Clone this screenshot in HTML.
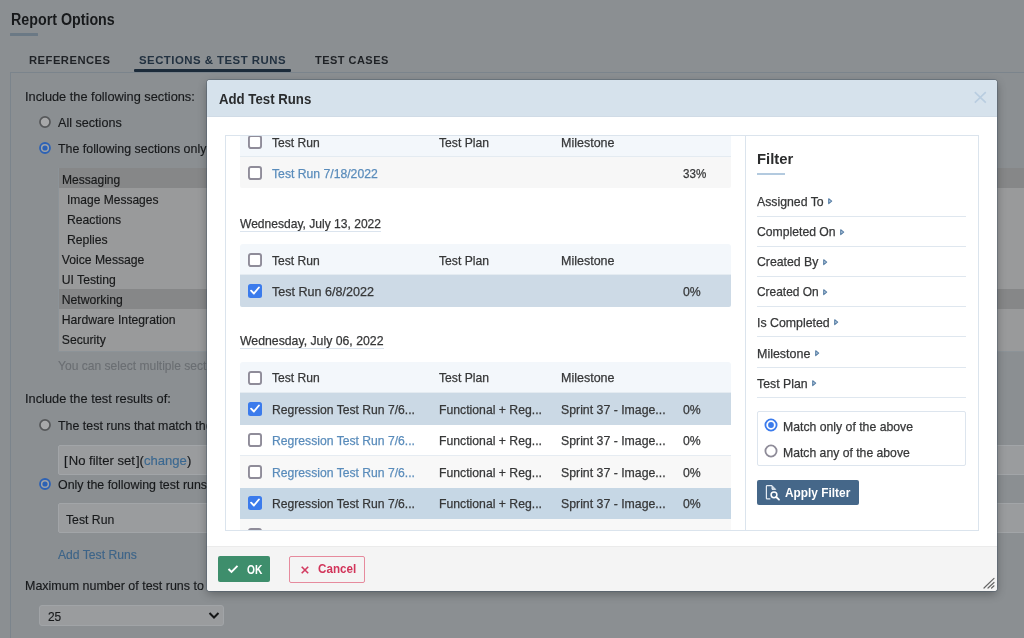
<!DOCTYPE html>
<html><head><meta charset="utf-8"><title>Add Test Runs</title>
<style>
html,body{margin:0;padding:0;}
body{width:1024px;height:638px;overflow:hidden;position:relative;will-change:transform;font-family:"Liberation Sans", sans-serif;background:#8b8f92;}
.t{position:absolute;white-space:nowrap;}
.r{position:absolute;}
</style></head><body>
<div class="t" id="t0" style="left:10.5px;top:9.05px;font-size:16px;line-height:21px;color:#17191b;font-weight:bold;transform:scaleX(0.8910);transform-origin:0 0;">Report Options</div>
<div class="r" style="left:10px;top:33px;width:28px;height:2.6px;background:#6b7985;border-radius:0.5px;"></div>
<div class="t" id="t1" style="left:29px;top:52.71px;font-size:11.8px;line-height:15px;color:#1f2226;font-weight:bold;letter-spacing:0.5px;transform:scaleX(0.9517);transform-origin:0 0;">REFERENCES</div>
<div class="t" id="t2" style="left:139px;top:52.71px;font-size:11.8px;line-height:15px;color:#223140;font-weight:bold;letter-spacing:0.5px;transform:scaleX(0.9656);transform-origin:0 0;">SECTIONS &amp; TEST RUNS</div>
<div class="r" style="left:134px;top:69.4px;width:157px;height:2.7px;background:#1c2b3a;border-radius:1px;"></div>
<div class="t" id="t3" style="left:314.75px;top:52.71px;font-size:11.8px;line-height:15px;color:#1f2226;font-weight:bold;letter-spacing:0.5px;transform:scaleX(0.9326);transform-origin:0 0;">TEST CASES</div>
<div class="r" style="left:10px;top:72px;width:1014px;height:1px;background:#7b848c;"></div>
<div class="r" style="left:10px;top:72px;width:1px;height:566px;background:#7b848c;"></div>
<div class="t" id="t4" style="left:25.2px;top:87.86px;font-size:12.8px;line-height:17px;color:#17191b;-webkit-text-stroke:0.15px #17191b;transform:scaleX(0.9987);transform-origin:0 0;">Include the following sections:</div>
<svg class="r" style="left:36.85px;top:114.10px" width="16" height="16" viewBox="0 0 16 16"><circle cx="8" cy="8" r="5.05" fill="#a7a8a9" stroke="#56585a" stroke-width="1.7"/></svg>
<div class="t" id="t5" style="left:58px;top:114.36px;font-size:12.8px;line-height:17px;color:#17191b;-webkit-text-stroke:0.15px #17191b;transform:scaleX(0.9840);transform-origin:0 0;">All sections</div>
<svg class="r" style="left:36.85px;top:140.10px" width="16" height="16" viewBox="0 0 16 16"><circle cx="8" cy="8" r="5.00" fill="#a2a4a6" stroke="#2d62b5" stroke-width="1.8"/><circle cx="8" cy="8" r="2.6" fill="#2d62b5"/></svg>
<div class="t" id="t6" style="left:58px;top:140.36px;font-size:12.8px;line-height:17px;color:#17191b;-webkit-text-stroke:0.15px #17191b;transform:scaleX(0.9700);transform-origin:0 0;">The following sections only</div>
<div class="r" style="left:57.5px;top:168.2px;width:980px;height:184.3px;background:#999a9b;box-sizing:border-box;border:1px solid #8c9398;"></div>
<div class="r" style="left:58.5px;top:168.2px;width:980px;height:20.08px;background:#868788;"></div>
<div class="t" id="t7" style="left:61.75px;top:171.57px;font-size:12.2px;line-height:16px;color:#18191a;-webkit-text-stroke:0.15px #18191a;transform:scaleX(0.9881);transform-origin:0 0;">Messaging</div>
<div class="t" id="t8" style="left:67.0px;top:191.65px;font-size:12.2px;line-height:16px;color:#18191a;-webkit-text-stroke:0.15px #18191a;transform:scaleX(0.9859);transform-origin:0 0;">Image Messages</div>
<div class="t" id="t9" style="left:67.0px;top:211.73px;font-size:12.2px;line-height:16px;color:#18191a;-webkit-text-stroke:0.15px #18191a;">Reactions</div>
<div class="t" id="t10" style="left:67.0px;top:231.81px;font-size:12.2px;line-height:16px;color:#18191a;-webkit-text-stroke:0.15px #18191a;">Replies</div>
<div class="t" id="t11" style="left:61.75px;top:251.89px;font-size:12.2px;line-height:16px;color:#18191a;-webkit-text-stroke:0.15px #18191a;">Voice Message</div>
<div class="t" id="t12" style="left:61.75px;top:271.97px;font-size:12.2px;line-height:16px;color:#18191a;-webkit-text-stroke:0.15px #18191a;">UI Testing</div>
<div class="r" style="left:58.5px;top:288.67999999999995px;width:980px;height:20.08px;background:#868788;"></div>
<div class="t" id="t13" style="left:61.75px;top:292.05px;font-size:12.2px;line-height:16px;color:#18191a;-webkit-text-stroke:0.15px #18191a;">Networking</div>
<div class="t" id="t14" style="left:61.75px;top:312.13px;font-size:12.2px;line-height:16px;color:#18191a;-webkit-text-stroke:0.15px #18191a;">Hardware Integration</div>
<div class="t" id="t15" style="left:61.75px;top:332.21px;font-size:12.2px;line-height:16px;color:#18191a;-webkit-text-stroke:0.15px #18191a;">Security</div>
<div class="t" id="t16" style="left:57.5px;top:357.77px;font-size:12.2px;line-height:16px;color:#6a6e72;-webkit-text-stroke:0.1px #6a6e72;transform:scaleX(0.9900);transform-origin:0 0;">You can select multiple sections</div>
<div class="t" id="t17" style="left:25px;top:390.06px;font-size:12.8px;line-height:17px;color:#17191b;-webkit-text-stroke:0.15px #17191b;transform:scaleX(0.9995);transform-origin:0 0;">Include the test results of:</div>
<svg class="r" style="left:36.85px;top:416.50px" width="16" height="16" viewBox="0 0 16 16"><circle cx="8" cy="8" r="5.05" fill="#a7a8a9" stroke="#56585a" stroke-width="1.7"/></svg>
<div class="t" id="t18" style="left:58px;top:417.06px;font-size:12.8px;line-height:17px;color:#17191b;-webkit-text-stroke:0.15px #17191b;transform:scaleX(0.9700);transform-origin:0 0;">The test runs that match the filter</div>
<div class="r" style="left:57.5px;top:444.5px;width:980px;height:30px;background:#9a9c9e;box-sizing:border-box;border:1px solid #a2a5a8;border-radius:2px;"></div>
<div class="t" id="t19" style="left:63.75px;top:451.56px;font-size:12.8px;line-height:17px;color:#17191b;-webkit-text-stroke:0.15px #17191b;transform:scaleX(1.0222);transform-origin:0 0;">[&#8202;No filter set&#8202;](<span style="color:#3b6890;-webkit-text-stroke:0.15px #3b6890">change</span>)</div>
<svg class="r" style="left:36.85px;top:475.80px" width="16" height="16" viewBox="0 0 16 16"><circle cx="8" cy="8" r="5.00" fill="#a2a4a6" stroke="#2d62b5" stroke-width="1.8"/><circle cx="8" cy="8" r="2.6" fill="#2d62b5"/></svg>
<div class="t" id="t20" style="left:58px;top:476.06px;font-size:12.8px;line-height:17px;color:#17191b;-webkit-text-stroke:0.15px #17191b;transform:scaleX(0.9700);transform-origin:0 0;">Only the following test runs</div>
<div class="r" style="left:57.5px;top:503px;width:980px;height:30px;background:#9a9c9e;box-sizing:border-box;border:1px solid #a2a5a8;border-radius:2px;"></div>
<div class="t" id="t21" style="left:66px;top:510.81px;font-size:12.8px;line-height:17px;color:#17191b;-webkit-text-stroke:0.15px #17191b;transform:scaleX(0.9554);transform-origin:0 0;">Test Run</div>
<div class="t" id="t22" style="left:58px;top:545.81px;font-size:12.8px;line-height:17px;color:#3d6488;-webkit-text-stroke:0.15px #3d6488;transform:scaleX(0.9488);transform-origin:0 0;">Add Test Runs</div>
<div class="t" id="t23" style="left:25px;top:577.06px;font-size:12.8px;line-height:17px;color:#17191b;-webkit-text-stroke:0.15px #17191b;transform:scaleX(0.9750);transform-origin:0 0;">Maximum number of test runs to include</div>
<div class="r" style="left:39.25px;top:604.8px;width:184.5px;height:21.6px;background:#9a9c9e;box-sizing:border-box;border:1px solid #a1a4a7;border-radius:3px;"></div>
<div class="t" id="t24" style="left:47.5px;top:608.06px;font-size:12.8px;line-height:17px;color:#17191b;-webkit-text-stroke:0.15px #17191b;transform:scaleX(0.9308);transform-origin:0 0;">25</div>
<svg class="r" style="left:208px;top:611px" width="12" height="9" viewBox="0 0 12 9"><path d="M1.5 2 L6 6.5 L10.5 2" fill="none" stroke="#151617" stroke-width="2"/></svg>
<div class="r" style="left:207px;top:80px;width:790px;height:511.4px;background:#fff;border-radius:3px;box-shadow:0 0 0 1px rgba(60,80,100,0.35), 0 3px 10px rgba(0,0,0,0.3);overflow:hidden;"><div class="r" style="left:0;top:0;width:790px;height:36.5px;background:#d6e2ec;box-shadow:inset 0 -1px 0 #d0dbe6;"></div><div class="r" style="left:0;top:466px;width:790px;height:45px;background:#f4f4f4;box-shadow:inset 0 1px 0 #ebebeb;"></div></div>
<div class="t" id="t25" style="left:218.75px;top:90.05px;font-size:14px;line-height:18px;color:#2a2c2e;font-weight:bold;transform:scaleX(0.9437);transform-origin:0 0;">Add Test Runs</div>
<svg class="r" style="left:973px;top:91px" width="14" height="13" viewBox="0 0 14 13"><path d="M1.8 1.2 L12.8 11.6 M12.8 1.2 L1.8 11.6" stroke="#b9cde0" stroke-width="1.6" fill="none"/></svg>
<div class="r" style="left:225px;top:135px;width:754px;height:396px;box-sizing:border-box;border:1px solid #dbe4ed;"></div>
<div class="r" style="left:745px;top:135px;width:1px;height:396px;background:#dbe4ed;"></div>
<div class="r" style="left:226px;top:136px;width:519px;height:394px;overflow:hidden;">
<div class="r" style="left:14px;top:-9.599999999999994px;width:491px;height:31px;background:#f3f7fb;border-radius:3px 3px 0 0;"></div>
<div class="r" style="left:14px;top:20.400000000000006px;width:491px;height:1px;background:#e4ebf1;"></div>
<svg class="r" style="left:22px;top:-1.0999999999999943px" width="14" height="14" viewBox="0 0 14 14"><rect x="0.95" y="0.95" width="12.1" height="12.1" rx="2" fill="#fff" stroke="#8f8c99" stroke-width="1.9"/></svg>
<div class="t" id="t26" style="left:46.25px;top:-1.20px;font-size:12.7px;line-height:17px;color:#363738;-webkit-text-stroke:0.25px #363738;transform:scaleX(0.9535);transform-origin:0 0;">Test Run</div>
<div class="t" id="t27" style="left:212.5px;top:-1.20px;font-size:12.7px;line-height:17px;color:#363738;-webkit-text-stroke:0.25px #363738;transform:scaleX(0.9581);transform-origin:0 0;">Test Plan</div>
<div class="t" id="t28" style="left:335px;top:-1.20px;font-size:12.7px;line-height:17px;color:#363738;-webkit-text-stroke:0.25px #363738;transform:scaleX(0.9850);transform-origin:0 0;">Milestone</div>
<div class="r" style="left:14px;top:21.400000000000006px;width:491px;height:30.8px;background:#f7f7f7;border-radius:0 0 2px 2px;"></div>
<svg class="r" style="left:22px;top:29.80000000000001px" width="14" height="14" viewBox="0 0 14 14"><rect x="0.95" y="0.95" width="12.1" height="12.1" rx="2" fill="#fff" stroke="#8f8c99" stroke-width="1.9"/></svg>
<div class="t" id="t29" style="left:46.25px;top:29.70px;font-size:12.7px;line-height:17px;color:#5a8cbb;-webkit-text-stroke:0.25px #5a8cbb;transform:scaleX(0.9610);transform-origin:0 0;">Test Run 7/18/2022</div>
<div class="t" id="t30" style="left:457.25px;top:29.70px;font-size:12.7px;line-height:17px;color:#363738;-webkit-text-stroke:0.25px #363738;transform:scaleX(0.9151);transform-origin:0 0;">33%</div>
<div class="t" id="t31" style="left:14px;top:79.90px;font-size:12.7px;line-height:17px;color:#363738;-webkit-text-stroke:0.25px #363738;transform:scaleX(0.9504);transform-origin:0 0;">Wednesday, July 13, 2022</div>
<div class="r" style="left:14px;top:95px;width:141px;height:1px;background:#dbe4ee;"></div>
<div class="r" style="left:14px;top:108.30000000000001px;width:491px;height:31px;background:#f3f7fb;border-radius:3px 3px 0 0;"></div>
<div class="r" style="left:14px;top:138.3px;width:491px;height:1px;background:#e4ebf1;"></div>
<svg class="r" style="left:22px;top:116.80000000000001px" width="14" height="14" viewBox="0 0 14 14"><rect x="0.95" y="0.95" width="12.1" height="12.1" rx="2" fill="#fff" stroke="#8f8c99" stroke-width="1.9"/></svg>
<div class="t" id="t32" style="left:46.25px;top:116.70px;font-size:12.7px;line-height:17px;color:#363738;-webkit-text-stroke:0.25px #363738;transform:scaleX(0.9535);transform-origin:0 0;">Test Run</div>
<div class="t" id="t33" style="left:212.5px;top:116.70px;font-size:12.7px;line-height:17px;color:#363738;-webkit-text-stroke:0.25px #363738;transform:scaleX(0.9581);transform-origin:0 0;">Test Plan</div>
<div class="t" id="t34" style="left:335px;top:116.70px;font-size:12.7px;line-height:17px;color:#363738;-webkit-text-stroke:0.25px #363738;transform:scaleX(0.9850);transform-origin:0 0;">Milestone</div>
<div class="r" style="left:14px;top:139.3px;width:491px;height:31.5px;background:#cddae6;border-radius:0 0 2px 2px;"></div>
<div class="r" style="left:22px;top:148.05px;width:14px;height:14px;border-radius:2.5px;background:#3b7bec;"></div>
<svg class="r" style="left:22px;top:148.05px" width="14" height="14" viewBox="0 0 14 14"><path d="M3.1 6.7 L5.9 9.5 L10.9 3.5" fill="none" stroke="#fff" stroke-width="1.9" stroke-linecap="round" stroke-linejoin="round"/></svg>
<div class="t" id="t35" style="left:46.25px;top:147.95px;font-size:12.7px;line-height:17px;color:#363738;-webkit-text-stroke:0.25px #363738;transform:scaleX(0.9904);transform-origin:0 0;">Test Run 6/8/2022</div>
<div class="t" id="t36" style="left:457.25px;top:147.95px;font-size:12.7px;line-height:17px;color:#363738;-webkit-text-stroke:0.25px #363738;transform:scaleX(0.9676);transform-origin:0 0;">0%</div>
<div class="t" id="t37" style="left:14px;top:197.20px;font-size:12.7px;line-height:17px;color:#363738;-webkit-text-stroke:0.25px #363738;transform:scaleX(0.9672);transform-origin:0 0;">Wednesday, July 06, 2022</div>
<div class="r" style="left:14px;top:212px;width:143.5px;height:1px;background:#dbe4ee;"></div>
<div class="r" style="left:14px;top:226px;width:491px;height:31px;background:#f3f7fb;border-radius:3px 3px 0 0;"></div>
<div class="r" style="left:14px;top:256px;width:491px;height:1px;background:#e4ebf1;"></div>
<svg class="r" style="left:22px;top:234.5px" width="14" height="14" viewBox="0 0 14 14"><rect x="0.95" y="0.95" width="12.1" height="12.1" rx="2" fill="#fff" stroke="#8f8c99" stroke-width="1.9"/></svg>
<div class="t" id="t38" style="left:46.25px;top:234.40px;font-size:12.7px;line-height:17px;color:#363738;-webkit-text-stroke:0.25px #363738;transform:scaleX(0.9535);transform-origin:0 0;">Test Run</div>
<div class="t" id="t39" style="left:212.5px;top:234.40px;font-size:12.7px;line-height:17px;color:#363738;-webkit-text-stroke:0.25px #363738;transform:scaleX(0.9581);transform-origin:0 0;">Test Plan</div>
<div class="t" id="t40" style="left:335px;top:234.40px;font-size:12.7px;line-height:17px;color:#363738;-webkit-text-stroke:0.25px #363738;transform:scaleX(0.9850);transform-origin:0 0;">Milestone</div>
<div class="r" style="left:14px;top:257px;width:491px;height:31.5px;background:#cbd9e5;"></div>
<div class="r" style="left:22px;top:265.75px;width:14px;height:14px;border-radius:2.5px;background:#3b7bec;"></div>
<svg class="r" style="left:22px;top:265.75px" width="14" height="14" viewBox="0 0 14 14"><path d="M3.1 6.7 L5.9 9.5 L10.9 3.5" fill="none" stroke="#fff" stroke-width="1.9" stroke-linecap="round" stroke-linejoin="round"/></svg>
<div class="t" id="t41" style="left:46.25px;top:265.65px;font-size:12.7px;line-height:17px;color:#363738;-webkit-text-stroke:0.25px #363738;transform:scaleX(0.9579);transform-origin:0 0;">Regression Test Run 7/6...</div>
<div class="t" id="t42" style="left:212.5px;top:265.65px;font-size:12.7px;line-height:17px;color:#363738;-webkit-text-stroke:0.25px #363738;transform:scaleX(0.9639);transform-origin:0 0;">Functional + Reg...</div>
<div class="t" id="t43" style="left:335.29999999999995px;top:265.65px;font-size:12.7px;line-height:17px;color:#363738;-webkit-text-stroke:0.25px #363738;transform:scaleX(0.9694);transform-origin:0 0;">Sprint 37 - Image...</div>
<div class="t" id="t44" style="left:457.25px;top:265.65px;font-size:12.7px;line-height:17px;color:#363738;-webkit-text-stroke:0.25px #363738;transform:scaleX(0.9676);transform-origin:0 0;">0%</div>
<div class="r" style="left:14px;top:288.5px;width:491px;height:31.5px;background:#ffffff;"></div>
<div class="r" style="left:14px;top:319.0px;width:491px;height:1px;background:#e6ecf2;"></div>
<svg class="r" style="left:22px;top:297.25px" width="14" height="14" viewBox="0 0 14 14"><rect x="0.95" y="0.95" width="12.1" height="12.1" rx="2" fill="#fff" stroke="#8f8c99" stroke-width="1.9"/></svg>
<div class="t" id="t45" style="left:46.25px;top:297.15px;font-size:12.7px;line-height:17px;color:#5a8cbb;-webkit-text-stroke:0.25px #5a8cbb;transform:scaleX(0.9579);transform-origin:0 0;">Regression Test Run 7/6...</div>
<div class="t" id="t46" style="left:212.5px;top:297.15px;font-size:12.7px;line-height:17px;color:#363738;-webkit-text-stroke:0.25px #363738;transform:scaleX(0.9639);transform-origin:0 0;">Functional + Reg...</div>
<div class="t" id="t47" style="left:335.29999999999995px;top:297.15px;font-size:12.7px;line-height:17px;color:#363738;-webkit-text-stroke:0.25px #363738;transform:scaleX(0.9694);transform-origin:0 0;">Sprint 37 - Image...</div>
<div class="t" id="t48" style="left:457.25px;top:297.15px;font-size:12.7px;line-height:17px;color:#363738;-webkit-text-stroke:0.25px #363738;transform:scaleX(0.9676);transform-origin:0 0;">0%</div>
<div class="r" style="left:14px;top:320px;width:491px;height:31.5px;background:#f8f8f8;"></div>
<svg class="r" style="left:22px;top:328.75px" width="14" height="14" viewBox="0 0 14 14"><rect x="0.95" y="0.95" width="12.1" height="12.1" rx="2" fill="#fff" stroke="#8f8c99" stroke-width="1.9"/></svg>
<div class="t" id="t49" style="left:46.25px;top:328.65px;font-size:12.7px;line-height:17px;color:#5a8cbb;-webkit-text-stroke:0.25px #5a8cbb;transform:scaleX(0.9579);transform-origin:0 0;">Regression Test Run 7/6...</div>
<div class="t" id="t50" style="left:212.5px;top:328.65px;font-size:12.7px;line-height:17px;color:#363738;-webkit-text-stroke:0.25px #363738;transform:scaleX(0.9639);transform-origin:0 0;">Functional + Reg...</div>
<div class="t" id="t51" style="left:335.29999999999995px;top:328.65px;font-size:12.7px;line-height:17px;color:#363738;-webkit-text-stroke:0.25px #363738;transform:scaleX(0.9694);transform-origin:0 0;">Sprint 37 - Image...</div>
<div class="t" id="t52" style="left:457.25px;top:328.65px;font-size:12.7px;line-height:17px;color:#363738;-webkit-text-stroke:0.25px #363738;transform:scaleX(0.9676);transform-origin:0 0;">0%</div>
<div class="r" style="left:14px;top:351.5px;width:491px;height:31.5px;background:#c6d7e5;"></div>
<div class="r" style="left:22px;top:360.25px;width:14px;height:14px;border-radius:2.5px;background:#3b7bec;"></div>
<svg class="r" style="left:22px;top:360.25px" width="14" height="14" viewBox="0 0 14 14"><path d="M3.1 6.7 L5.9 9.5 L10.9 3.5" fill="none" stroke="#fff" stroke-width="1.9" stroke-linecap="round" stroke-linejoin="round"/></svg>
<div class="t" id="t53" style="left:46.25px;top:360.15px;font-size:12.7px;line-height:17px;color:#363738;-webkit-text-stroke:0.25px #363738;transform:scaleX(0.9579);transform-origin:0 0;">Regression Test Run 7/6...</div>
<div class="t" id="t54" style="left:212.5px;top:360.15px;font-size:12.7px;line-height:17px;color:#363738;-webkit-text-stroke:0.25px #363738;transform:scaleX(0.9639);transform-origin:0 0;">Functional + Reg...</div>
<div class="t" id="t55" style="left:335.29999999999995px;top:360.15px;font-size:12.7px;line-height:17px;color:#363738;-webkit-text-stroke:0.25px #363738;transform:scaleX(0.9694);transform-origin:0 0;">Sprint 37 - Image...</div>
<div class="t" id="t56" style="left:457.25px;top:360.15px;font-size:12.7px;line-height:17px;color:#363738;-webkit-text-stroke:0.25px #363738;transform:scaleX(0.9676);transform-origin:0 0;">0%</div>
<div class="r" style="left:14px;top:383px;width:491px;height:31.5px;background:#f8f8f8;"></div>
<svg class="r" style="left:22px;top:391.75px" width="14" height="14" viewBox="0 0 14 14"><rect x="0.95" y="0.95" width="12.1" height="12.1" rx="2" fill="#fff" stroke="#8f8c99" stroke-width="1.9"/></svg>
<div class="t" id="t57" style="left:46.25px;top:391.65px;font-size:12.7px;line-height:17px;color:#5a8cbb;-webkit-text-stroke:0.25px #5a8cbb;transform:scaleX(0.9579);transform-origin:0 0;">Regression Test Run 7/6...</div>
<div class="t" id="t58" style="left:212.5px;top:391.65px;font-size:12.7px;line-height:17px;color:#363738;-webkit-text-stroke:0.25px #363738;transform:scaleX(0.9639);transform-origin:0 0;">Functional + Reg...</div>
<div class="t" id="t59" style="left:335.29999999999995px;top:391.65px;font-size:12.7px;line-height:17px;color:#363738;-webkit-text-stroke:0.25px #363738;transform:scaleX(0.9694);transform-origin:0 0;">Sprint 37 - Image...</div>
<div class="t" id="t60" style="left:457.25px;top:391.65px;font-size:12.7px;line-height:17px;color:#363738;-webkit-text-stroke:0.25px #363738;transform:scaleX(0.9676);transform-origin:0 0;">0%</div>
</div>
<div class="t" id="t61" style="left:757.1px;top:149.03px;font-size:15.5px;line-height:20px;color:#2b2c2d;font-weight:bold;transform:scaleX(0.9576);transform-origin:0 0;">Filter</div>
<div class="r" style="left:757px;top:172.6px;width:28px;height:2.6px;background:#b3cadf;"></div>
<div class="t" id="t62" style="left:757.1px;top:194.00px;font-size:12.7px;line-height:17px;color:#363738;-webkit-text-stroke:0.25px #363738;transform:scaleX(0.9682);transform-origin:0 0;">Assigned To</div>
<svg class="r" style="left:828.20px;top:198.30px" width="5" height="7" viewBox="0 0 5 7"><path d="M0.7 0.7 L3.7 3.2 L0.7 5.7 Z" fill="#b4cadf" stroke="#5a80a6" stroke-width="1.1" stroke-linejoin="round"/></svg>
<div class="r" style="left:757px;top:215.5px;width:209px;height:1px;background:#dfe7ef;"></div>
<div class="t" id="t63" style="left:757.1px;top:224.25px;font-size:12.7px;line-height:17px;color:#363738;-webkit-text-stroke:0.25px #363738;transform:scaleX(0.9607);transform-origin:0 0;">Completed On</div>
<svg class="r" style="left:840.10px;top:228.55px" width="5" height="7" viewBox="0 0 5 7"><path d="M0.7 0.7 L3.7 3.2 L0.7 5.7 Z" fill="#b4cadf" stroke="#5a80a6" stroke-width="1.1" stroke-linejoin="round"/></svg>
<div class="r" style="left:757px;top:245.75px;width:209px;height:1px;background:#dfe7ef;"></div>
<div class="t" id="t64" style="left:757.1px;top:254.25px;font-size:12.7px;line-height:17px;color:#363738;-webkit-text-stroke:0.25px #363738;transform:scaleX(0.9674);transform-origin:0 0;">Created By</div>
<svg class="r" style="left:822.90px;top:258.55px" width="5" height="7" viewBox="0 0 5 7"><path d="M0.7 0.7 L3.7 3.2 L0.7 5.7 Z" fill="#b4cadf" stroke="#5a80a6" stroke-width="1.1" stroke-linejoin="round"/></svg>
<div class="r" style="left:757px;top:275.75px;width:209px;height:1px;background:#dfe7ef;"></div>
<div class="t" id="t65" style="left:757.1px;top:284.25px;font-size:12.7px;line-height:17px;color:#363738;-webkit-text-stroke:0.25px #363738;transform:scaleX(0.9406);transform-origin:0 0;">Created On</div>
<svg class="r" style="left:823.20px;top:288.55px" width="5" height="7" viewBox="0 0 5 7"><path d="M0.7 0.7 L3.7 3.2 L0.7 5.7 Z" fill="#b4cadf" stroke="#5a80a6" stroke-width="1.1" stroke-linejoin="round"/></svg>
<div class="r" style="left:757px;top:305.75px;width:209px;height:1px;background:#dfe7ef;"></div>
<div class="t" id="t66" style="left:757.1px;top:314.75px;font-size:12.7px;line-height:17px;color:#363738;-webkit-text-stroke:0.25px #363738;transform:scaleX(0.9726);transform-origin:0 0;">Is Completed</div>
<svg class="r" style="left:834.20px;top:319.05px" width="5" height="7" viewBox="0 0 5 7"><path d="M0.7 0.7 L3.7 3.2 L0.7 5.7 Z" fill="#b4cadf" stroke="#5a80a6" stroke-width="1.1" stroke-linejoin="round"/></svg>
<div class="r" style="left:757px;top:336.25px;width:209px;height:1px;background:#dfe7ef;"></div>
<div class="t" id="t67" style="left:757.1px;top:345.50px;font-size:12.7px;line-height:17px;color:#363738;-webkit-text-stroke:0.25px #363738;transform:scaleX(0.9832);transform-origin:0 0;">Milestone</div>
<svg class="r" style="left:814.90px;top:349.80px" width="5" height="7" viewBox="0 0 5 7"><path d="M0.7 0.7 L3.7 3.2 L0.7 5.7 Z" fill="#b4cadf" stroke="#5a80a6" stroke-width="1.1" stroke-linejoin="round"/></svg>
<div class="r" style="left:757px;top:367px;width:209px;height:1px;background:#dfe7ef;"></div>
<div class="t" id="t68" style="left:757.1px;top:375.50px;font-size:12.7px;line-height:17px;color:#363738;-webkit-text-stroke:0.25px #363738;transform:scaleX(0.9696);transform-origin:0 0;">Test Plan</div>
<svg class="r" style="left:812.10px;top:379.80px" width="5" height="7" viewBox="0 0 5 7"><path d="M0.7 0.7 L3.7 3.2 L0.7 5.7 Z" fill="#b4cadf" stroke="#5a80a6" stroke-width="1.1" stroke-linejoin="round"/></svg>
<div class="r" style="left:757px;top:397px;width:209px;height:1px;background:#dfe7ef;"></div>
<div class="r" style="left:756.7px;top:411.4px;width:209.3px;height:54.8px;background:#fff;box-sizing:border-box;border:1px solid #dde5ee;border-radius:2px;"></div>
<svg class="r" style="left:762.70px;top:417.30px" width="16" height="16" viewBox="0 0 16 16"><circle cx="8" cy="8" r="5.60" fill="#fff" stroke="#3b7bec" stroke-width="1.8"/><circle cx="8" cy="8" r="2.9" fill="#3b7bec"/></svg>
<div class="t" id="t69" style="left:783.1px;top:418.70px;font-size:12.7px;line-height:17px;color:#363738;-webkit-text-stroke:0.25px #363738;transform:scaleX(0.9650);transform-origin:0 0;">Match only of the above</div>
<svg class="r" style="left:762.70px;top:443.10px" width="16" height="16" viewBox="0 0 16 16"><circle cx="8" cy="8" r="5.60" fill="#fff" stroke="#8e8b98" stroke-width="1.8"/></svg>
<div class="t" id="t70" style="left:783.1px;top:444.50px;font-size:12.7px;line-height:17px;color:#363738;-webkit-text-stroke:0.25px #363738;transform:scaleX(0.9613);transform-origin:0 0;">Match any of the above</div>
<div class="r" style="left:756.8px;top:480.3px;width:102px;height:24.6px;background:#456789;border-radius:2px;"></div>
<svg class="r" style="left:764px;top:484px" width="17" height="18" viewBox="0 0 17 18"><path d="M8 1.6 H3.1 Q2.4 1.6 2.4 2.3 V14.2 Q2.4 14.9 3.1 14.9 H6.3" fill="none" stroke="#e4ebf2" stroke-width="1.2"/><path d="M8 1.6 L11.7 5.4 H8 Z" fill="#c9d6e3" stroke="#e4ebf2" stroke-width="1" stroke-linejoin="round"/><circle cx="10" cy="10.8" r="2.9" fill="none" stroke="#fff" stroke-width="1.5"/><path d="M12.2 13 L15 15.7" stroke="#fff" stroke-width="1.8" stroke-linecap="round"/></svg>
<div class="t" id="t71" style="left:785.2px;top:483.99px;font-size:13px;line-height:17px;color:#fff;font-weight:bold;transform:scaleX(0.9131);transform-origin:0 0;">Apply Filter</div>
<div class="r" style="left:218.1px;top:556px;width:52.2px;height:26px;background:#3e8e6c;border-radius:2px;"></div>
<svg class="r" style="left:227px;top:564px" width="12" height="10" viewBox="0 0 12 10"><path d="M1.5 5 L4.5 8 L10.5 1.8" fill="none" stroke="#fff" stroke-width="1.9"/></svg>
<div class="t" id="t72" style="left:246.7px;top:560.82px;font-size:13.5px;line-height:18px;color:#fff;font-weight:bold;transform:scaleX(0.7556);transform-origin:0 0;">OK</div>
<div class="r" style="left:289px;top:556px;width:75.7px;height:27px;background:#f4f4f4;box-sizing:border-box;border:1px solid #e68a9d;border-radius:2px;"></div>
<svg class="r" style="left:299.5px;top:565px" width="10" height="10" viewBox="0 0 10 10"><path d="M1.7 1.7 L8.2 8.2 M8.2 1.7 L1.7 8.2" stroke="#d23a60" stroke-width="1.6"/></svg>
<div class="t" id="t73" style="left:317.8px;top:560.39px;font-size:13px;line-height:17px;color:#d2345a;font-weight:bold;transform:scaleX(0.8959);transform-origin:0 0;">Cancel</div>
<svg class="r" style="left:982px;top:576px" width="14" height="14" viewBox="0 0 14 14"><path d="M2 12 L12 2.4 M6 12 L12 6.5 M9.6 12 L12 9.8" stroke="#666" stroke-width="1.2" stroke-linecap="round"/></svg>
</body></html>
